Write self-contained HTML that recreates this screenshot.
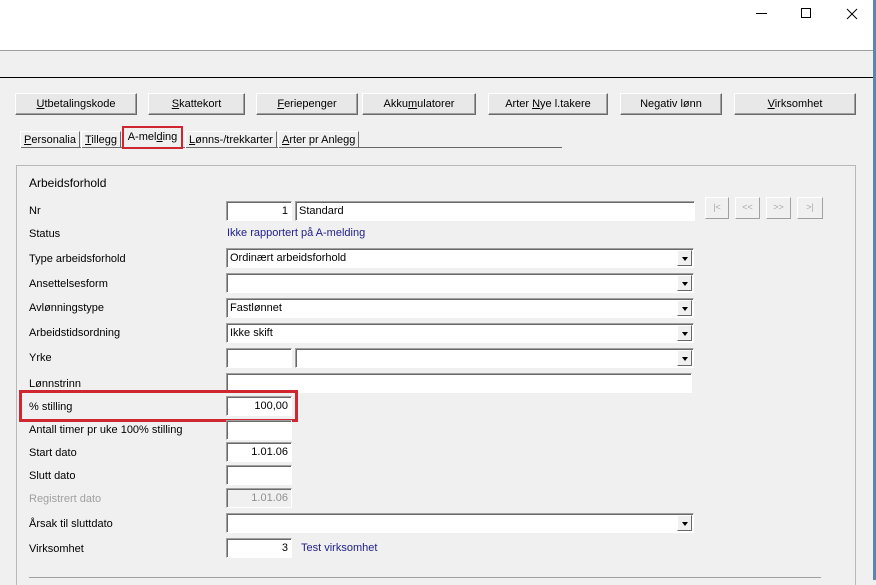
<!DOCTYPE html>
<html><head><meta charset="utf-8"><style>
*{box-sizing:border-box;margin:0;padding:0}
body{width:876px;height:580px;overflow:hidden;background:#f0f0f0;font-family:"Liberation Sans",sans-serif;font-size:11px;color:#000;position:relative}
.a{position:absolute}
.btn{position:absolute;top:93px;height:22px;background:#e8e8e8;border:1px solid #fff;border-right-color:#696969;border-bottom-color:#696969;box-shadow:inset -1px -1px 0 #a0a0a0;text-align:center;line-height:21px;font-size:11px}
.lbl{position:absolute;left:29px;line-height:14px}
.f{position:absolute;height:20px;background:#fff;border:1px solid #fff;border-top-color:#a0a0a0;border-left-color:#a0a0a0;box-shadow:inset 1px 1px 0 #696969;line-height:19px;padding:0 3px;white-space:nowrap}
.r{text-align:right}
.dd::after{content:"";position:absolute;right:1px;top:1px;width:15px;height:16px;background:#f0f0f0;border:1px solid #fff;border-right-color:#696969;border-bottom-color:#696969;box-sizing:border-box}
.dd::before{content:"";position:absolute;right:5px;top:8px;border:3.5px solid transparent;border-top:4px solid #000;border-bottom:0;z-index:2}
.tab{position:absolute;top:131px;height:17px;border:1px solid #fff;border-right-color:#696969;border-bottom:0;line-height:17px;padding:0 3px}
.nav{position:absolute;top:197px;height:22px;border:1px solid #fff;border-right-color:#a0a0a0;border-bottom-color:#a0a0a0;color:#a8a8a8;font-size:9px;text-align:center;line-height:19px}
u{text-decoration:underline}
</style></head><body>
<div class="a" style="left:0;top:0;width:876px;height:50px;background:#fff"></div>
<div class="a" style="left:0;top:50px;width:873px;height:1px;background:#a0a0a0"></div>
<div class="a" style="left:0;top:77px;width:873px;height:1px;background:#000"></div>
<div class="a" style="left:873px;top:0;width:3px;height:580px;background:#5a86b5"></div>
<div class="a" style="left:756px;top:13px;width:11px;height:1px;background:#000"></div>
<div class="a" style="left:801px;top:8px;width:10px;height:10px;border:1px solid #000"></div>
<svg class="a" style="left:846px;top:8px" width="12" height="12"><path d="M1 1L11 11M11 1L1 11" stroke="#000" stroke-width="1"/></svg>

<div class="btn" style="left:15px;width:122px"><u>U</u>tbetalingskode</div>
<div class="btn" style="left:148px;width:97px"><u>S</u>kattekort</div>
<div class="btn" style="left:256px;width:102px"><u>F</u>eriepenger</div>
<div class="btn" style="left:362px;width:114px">Akku<u>m</u>ulatorer</div>
<div class="btn" style="left:488px;width:120px">Arter <u>N</u>ye l.takere</div>
<div class="btn" style="left:620px;width:102px">Ne<u>g</u>ativ lønn</div>
<div class="btn" style="left:734px;width:122px"><u>V</u>irksomhet</div>

<div class="a" style="left:20px;top:147px;width:542px;height:1px;background:#696969"></div>
<div class="tab" style="left:20px"><u>P</u>ersonalia</div>
<div class="tab" style="left:81px"><u>T</u>illegg</div>
<div class="tab" style="left:185px"><u>L</u>ønns-/trekkarter</div>
<div class="tab" style="left:278px"><u>A</u>rter pr Anlegg</div>
<div class="a" style="left:122px;top:126px;width:61px;height:23px;background:#f0f0f0;border:2px solid #d0262f;line-height:19px;text-align:center">A-mel<u>d</u>ing</div>

<div class="a" style="left:16px;top:165px;width:840px;height:420px;border:1px solid #b8b8b8;border-bottom:0"></div>
<div class="a" style="left:29px;top:176px;font-size:12px">Arbeidsforhold</div>

<div class="lbl" style="top:204px">Nr</div>
<div class="f r" style="left:226px;top:201px;width:66px">1</div>
<div class="f" style="left:295px;top:201px;width:400px">Standard</div>
<div class="nav" style="left:705px;width:24px">|&lt;</div>
<div class="nav" style="left:735px;width:25px">&lt;&lt;</div>
<div class="nav" style="left:766px;width:25px">&gt;&gt;</div>
<div class="nav" style="left:797px;width:26px">&gt;|</div>

<div class="lbl" style="top:227px">Status</div>
<div class="a" style="left:227px;top:227px;color:#1e1e8a">Ikke rapportert på A-melding</div>

<div class="lbl" style="top:252px">Type arbeidsforhold</div>
<div class="f dd" style="left:226px;top:248px;width:468px">Ordinært arbeidsforhold</div>
<div class="lbl" style="top:277px">Ansettelsesform</div>
<div class="f dd" style="left:226px;top:273px;width:468px"></div>
<div class="lbl" style="top:301px">Avlønningstype</div>
<div class="f dd" style="left:226px;top:298px;width:468px">Fastlønnet</div>
<div class="lbl" style="top:326px">Arbeidstidsordning</div>
<div class="f dd" style="left:226px;top:323px;width:468px">Ikke skift</div>
<div class="lbl" style="top:351px">Yrke</div>
<div class="f" style="left:226px;top:348px;width:66px"></div>
<div class="f dd" style="left:295px;top:348px;width:399px"></div>
<div class="lbl" style="top:377px">Lønnstrinn</div>
<div class="f" style="left:226px;top:373px;width:466px"></div>

<div class="a" style="left:19px;top:390px;width:279px;height:32px;border:3px solid #d0262f"></div>
<div class="lbl" style="top:400px">% stilling</div>
<div class="f r" style="left:226px;top:396px;width:66px">100,00</div>
<div class="lbl" style="top:423px">Antall timer pr uke 100% stilling</div>
<div class="f" style="left:226px;top:420px;width:66px"></div>
<div class="lbl" style="top:446px">Start dato</div>
<div class="f r" style="left:226px;top:442px;width:66px">1.01.06</div>
<div class="lbl" style="top:469px">Slutt dato</div>
<div class="f" style="left:226px;top:465px;width:66px"></div>
<div class="lbl" style="top:492px;color:#a0a0a0">Registrert dato</div>
<div class="f r" style="left:226px;top:488px;width:66px;background:#f0f0f0;color:#909090">1.01.06</div>
<div class="lbl" style="top:517px">Årsak til sluttdato</div>
<div class="f dd" style="left:226px;top:513px;width:468px"></div>
<div class="lbl" style="top:542px">Virksomhet</div>
<div class="f r" style="left:226px;top:538px;width:66px">3</div>
<div class="a" style="left:301px;top:542px;color:#1e1e8a">Test virksomhet</div>
<div class="a" style="left:29px;top:577px;width:792px;height:1px;background:#a0a0a0"></div>
</body></html>
